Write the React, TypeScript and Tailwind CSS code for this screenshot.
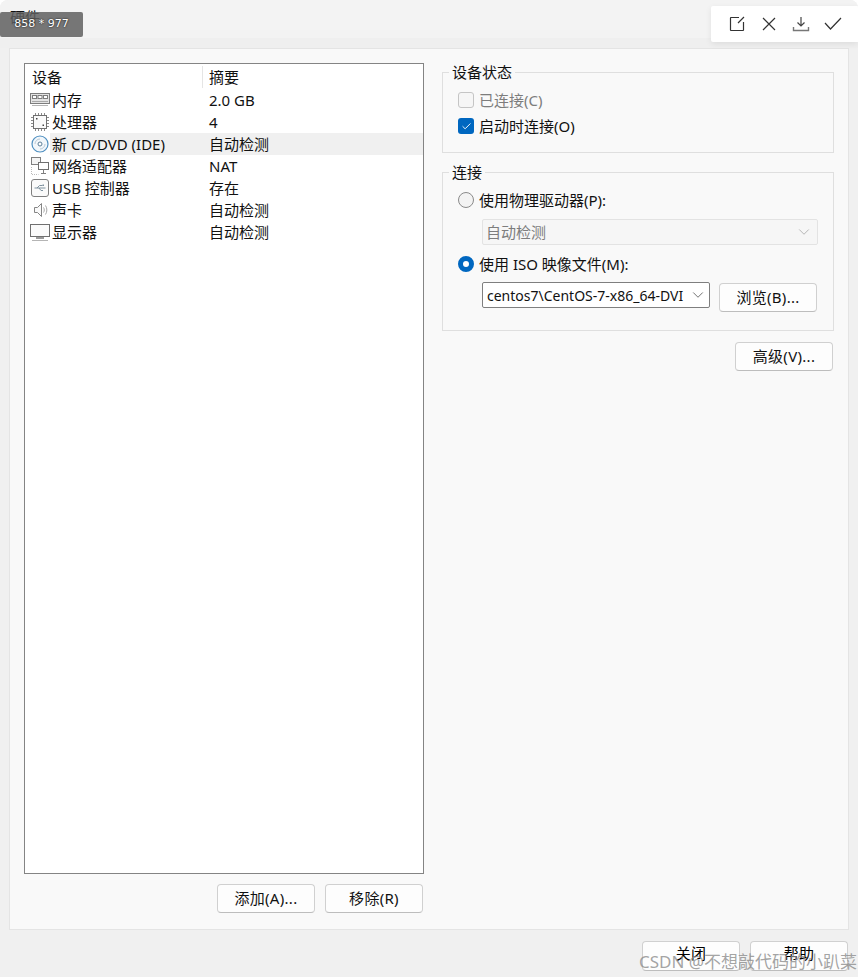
import type { ReactNode } from "react";
import { Check, ChevronDown } from "lucide-react";

const FONT = "font-['Noto_Sans','Noto_Sans_CJK_SC',sans-serif]";

function MemoryIcon() {
  return (
    <svg width="20" height="16" viewBox="0 0 20 16" fill="none" stroke="#7d7d7d">
      <rect x="0.500" y="1.500" width="19" height="10" fill="#e4e4e4" />
      <rect x="2.500" y="3.500" width="4" height="3" fill="#fff" />
      <rect x="8" y="3.500" width="4" height="3" fill="#fff" />
      <rect x="13.500" y="3.500" width="4" height="3" fill="#fff" />
      <path d="M2 9.500h16" stroke="#a8a8a8" />
      <path d="M2 13.500h16" stroke="#b5b5b5" />
    </svg>
  );
}

function CpuIcon() {
  return (
    <svg width="20" height="20" viewBox="0 0 20 20" fill="none" stroke="#8a8a8a">
      <rect x="3.500" y="3.500" width="13" height="13" fill="#fafafa" stroke="#707070" />
      <path d="M5.500 1v2M8.500 1v2M11.500 1v2M14.500 1v2M5.500 17v2M8.500 17v2M11.500 17v2M14.500 17v2M1 5.500h2M1 8.500h2M1 11.500h2M1 14.500h2M17 5.500h2M17 8.500h2M17 11.500h2M17 14.500h2" />
      <rect x="6" y="6" width="1.500" height="1.500" fill="#444" stroke="none" />
      <rect x="12.500" y="12.500" width="1.500" height="1.500" fill="#444" stroke="none" />
    </svg>
  );
}

function DiscIcon() {
  return (
    <svg width="20" height="20" viewBox="0 0 20 20" fill="none">
      <circle cx="10" cy="10" r="8" fill="#f2f7fb" stroke="#4f8fc0" strokeWidth="1.200" />
      <path d="M5 10a5 5 0 0 1 5-5M15 10a5 5 0 0 1-5 5" stroke="#b9cad8" />
      <circle cx="10" cy="10" r="2" fill="#fff" stroke="#5d7f99" />
    </svg>
  );
}

function NetworkIcon() {
  return (
    <svg width="20" height="20" viewBox="0 0 20 20" fill="none" stroke="#7f7f7f">
      <rect x="1.500" y="1.500" width="9" height="7" fill="#f4f4f4" />
      <rect x="8.500" y="6.500" width="10" height="7" fill="#fff" stroke="#6f6f6f" />
      <path d="M11 17.500h5M13.500 13.500v4" />
      <path d="M1.500 11v7.500h7" stroke="#bbbbbb" strokeDasharray="1 1" />
    </svg>
  );
}

function UsbIcon() {
  return (
    <svg width="20" height="20" viewBox="0 0 20 20" fill="none" stroke="#7f7f7f">
      <rect x="1.500" y="1.500" width="17" height="17" rx="2.500" fill="#fafafa" />
      <path d="M4.500 10h11M7 10l2.500-2.500h3M9 10l2 2.500h2" stroke="#7f929f" />
      <rect x="12.500" y="6.500" width="1.500" height="1.500" fill="#7f929f" stroke="none" />
    </svg>
  );
}

function SoundIcon() {
  return (
    <svg width="20" height="20" viewBox="0 0 20 20" fill="none" stroke="#858585">
      <path d="M4.500 7.500h3l4-4v13l-4-4h-3z" fill="#fafafa" />
      <path d="M13.500 7.500c1 1.500 1 3.500 0 5M15.500 5.500c1.800 2.800 1.800 6.200 0 9" stroke="#a8a8a8" />
    </svg>
  );
}

function MonitorIcon() {
  return (
    <svg width="20" height="20" viewBox="0 0 20 20" fill="none" stroke="#6f6f6f">
      <rect x="0.500" y="2.500" width="19" height="12" fill="#fafafa" />
      <path d="M6 16h8" strokeWidth="2" stroke="#9a9a9a" />
      <path d="M2 18.500h16" stroke="#b5b5b5" />
    </svg>
  );
}

const DEVICES: { icon: ReactNode; name: string; summary: string; active?: boolean }[] = [
  { icon: <MemoryIcon />, name: "内存", summary: "2.0 GB" },
  { icon: <CpuIcon />, name: "处理器", summary: "4" },
  { icon: <DiscIcon />, name: "新 CD/DVD (IDE)", summary: "自动检测", active: true },
  { icon: <NetworkIcon />, name: "网络适配器", summary: "NAT" },
  { icon: <UsbIcon />, name: "USB 控制器", summary: "存在" },
  { icon: <SoundIcon />, name: "声卡", summary: "自动检测" },
  { icon: <MonitorIcon />, name: "显示器", summary: "自动检测" },
];

function Btn({ children, className = "" }: { children: ReactNode; className?: string }) {
  return (
    <button className={`h-[29px] w-[98px] rounded-[4px] border border-[#d0d0d0] border-b-[#bdbdbd] bg-[#fdfdfd] text-[15px] leading-none tracking-[0.3px] text-[#111] ${className}`}>
      {children}
    </button>
  );
}

function Group({ title, className, children }: { title: string; className: string; children: ReactNode }) {
  return (
    <fieldset className={`border border-[#dfdfdf] px-[15px] pt-[5px] ${className}`}>
      <legend className="-ml-[9px] px-[3px] text-[15px] leading-[20px] text-[#111]">{title}</legend>
      {children}
    </fieldset>
  );
}

function Radio({ on }: { on?: boolean }) {
  return on ? (
    <span className="h-4 w-4 rounded-full border-[5px] border-[#0067c0] bg-white" />
  ) : (
    <span className="h-4 w-4 rounded-full border border-[#8a8a8a] bg-[#f3f3f3]" />
  );
}

export default function App() {
  return (
    <div className={`relative flex h-[977px] w-[858px] flex-col overflow-hidden rounded-t-[8px] bg-[#f0f0f0] ${FONT}`}>
      {/* window title strip */}
      <div className="h-[38px] bg-[#f3f3f3] pl-[10px] pt-[7px] text-[15px] leading-[20px] text-[#111]">硬件</div>
      <div className="h-[10px] bg-[#efefef]" />

      <div className="mx-[9px] flex h-[882px] w-[840px] gap-[18px] border border-[#e4e4e4] bg-[#f9f9f9] pl-[14px] pt-[14px]">
        {/* left: device list */}
        <div className="flex w-[400px] flex-col">
          <div className="h-[811px] border border-[#848484] bg-white text-[15px] text-[#111]">
            <div className="flex h-[25px] items-center">
              <div className="w-[178px] border-r border-[#e5e5e5] pl-[7px] leading-[22px]">设备</div>
              <div className="pl-[6px] leading-[22px]">摘要</div>
            </div>
            {DEVICES.map((d) => (
              <div key={d.name} className="flex h-[22px] items-center">
                <div className="flex w-[25px] shrink-0 justify-end">{d.icon}</div>
                <div className={`flex h-full flex-1 items-center ${d.active ? "bg-[#f0f0f0]" : ""}`}>
                  <div className="w-[159px] whitespace-nowrap pl-[2px]">{d.name}</div>
                  <div className="whitespace-nowrap">{d.summary}</div>
                </div>
              </div>
            ))}
          </div>
          <div className="mt-[10px] flex justify-end gap-[10px] pr-[1px]">
            <Btn>添加(A)...</Btn>
            <Btn>移除(R)</Btn>
          </div>
        </div>

        {/* right: settings */}
        <div className="flex w-[392px] flex-col">
          <Group title="设备状态" className="-mt-[1px] h-[91px]">
            <div className="flex h-[26px] items-center gap-[5px] text-[15px] text-[#7d7d7d]">
              <span className="h-4 w-4 rounded-[3px] border border-[#c5c5c5] bg-[#f6f6f6]" />
              已连接(C)
            </div>
            <div className="flex h-[26px] items-center gap-[5px] text-[15px] text-[#111]">
              <span className="flex h-4 w-4 items-center justify-center rounded-[3px] bg-[#0067c0]">
                <Check size={11} color="#fff" strokeWidth={2} />
              </span>
              启动时连接(O)
            </div>
          </Group>

          <Group title="连接" className="mt-[9px] h-[169px]">
            <div className="flex h-[26px] items-center gap-[5px] text-[15px] text-[#111]">
              <Radio />
              使用物理驱动器(P):
            </div>
            <div className="ml-[24px] mt-[6px] flex h-[26px] w-[336px] items-center justify-between rounded-[2px] border border-[#e3e3e3] bg-[#f6f6f6] pl-[3px] pr-[4px] text-[15px] text-[#7d7d7d]">
              自动检测
              <ChevronDown size={18} color="#a8a8a8" strokeWidth={1.1} />
            </div>
            <div className="mt-[6px] flex h-[26px] items-center gap-[5px] text-[15px] text-[#111]">
              <Radio on />
              使用 ISO 映像文件(M):
            </div>
            <div className="ml-[24px] mt-[5px] flex items-start gap-[9px]">
              <div className="flex h-[26px] w-[228px] items-center justify-between rounded-[2px] border border-[#7f7f7f] bg-white pl-[4px] pr-[2px] text-[14px] text-[#111]">
                <span className="whitespace-nowrap">centos7\CentOS-7-x86_64-DVI</span>
                <ChevronDown size={18} color="#555" strokeWidth={1.1} />
              </div>
              <Btn className="mt-[1px]">浏览(B)...</Btn>
            </div>
          </Group>

          <div className="mt-[11px] flex justify-end pr-[1px]">
            <Btn>高级(V)...</Btn>
          </div>
        </div>
      </div>

      <div className="mt-[11px] flex justify-end gap-[10px] pr-[10px]">
        <Btn className="h-[30px] pb-[6px] text-black">关闭</Btn>
        <Btn className="h-[30px] pb-[6px] text-black">帮助</Btn>
      </div>

      {/* capture toolbar + overlays */}
      <div className="absolute left-0 top-[12px] flex h-[25px] w-[83px] items-center justify-center rounded-[2px] bg-[#5f5f5f]/85 font-['DejaVu_Sans',sans-serif] text-[11px] text-white [text-shadow:0_0_2px_#000]">
        858 * 977
      </div>
      <div className="absolute right-0 top-[6px] flex h-[36px] w-[147px] items-center gap-[12px] rounded-l-[2px] bg-white pl-[16px] shadow-[0_2px_6px_rgba(0,0,0,0.08)]">
        <svg width="20" height="20" viewBox="0 0 20 20" fill="none" stroke="#333" strokeWidth="1.200">
          <path d="M12 3.500H4a.5.500 0 0 0-.5.500v12a.5.500 0 0 0 .5.500h12a.5.500 0 0 0 .5-.5V8M11 9l6-6" />
        </svg>
        <svg width="20" height="20" viewBox="0 0 20 20" fill="none" stroke="#333" strokeWidth="1.200">
          <path d="M4 4l12 12M16 4L4 16" />
        </svg>
        <svg width="20" height="20" viewBox="0 0 20 20" fill="none" stroke="#444" strokeWidth="1.200">
          <path d="M10 3v9M6.500 8.500L10 12l3.500-3.500" />
          <path d="M2.500 13v3.500h15V13" stroke="#777" strokeWidth="1.400" />
        </svg>
        <svg width="20" height="20" viewBox="0 0 20 20" fill="none" stroke="#333" strokeWidth="1.200">
          <path d="M2 9l5.500 6L18 4" />
        </svg>
      </div>
      <div className="absolute left-[639px] top-[950px] whitespace-nowrap text-[17px] leading-[24px] text-[#8c8c8c]/80">
        CSDN @不想敲代码的小趴菜
      </div>
    </div>
  );
}
